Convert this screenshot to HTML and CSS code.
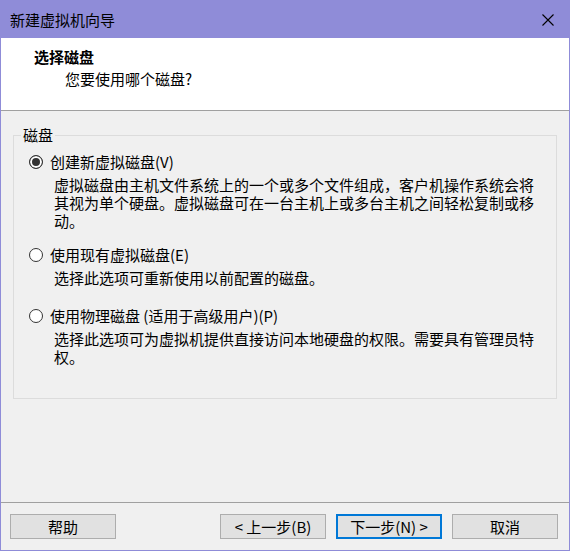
FILE: index.html
```html
<!DOCTYPE html>
<html lang="zh-CN">
<head>
<meta charset="utf-8">
<title>新建虚拟机向导</title>
<link rel="stylesheet" href="styles.css">
</head>
<body>
<div class="window">
  <div class="titlebar">
    <span class="title">新建虚拟机向导</span>
    <svg class="close" width="12" height="12" viewBox="0 0 12 12"><path d="M0.5 0.5 L11.5 11.5 M11.5 0.5 L0.5 11.5" stroke="#000" stroke-width="1.1" fill="none"/></svg>
  </div>
  <div class="header">
    <div class="header-title">选择磁盘</div>
    <div class="header-sub">您要使用哪个磁盘?</div>
  </div>
  <div class="body">
    <fieldset class="group">
      <legend class="group-label">磁盘</legend>
      <div class="group-inner">
        <div class="option">
          <span class="radio checked"></span>
          <span class="option-label">创建新虚拟磁盘(V)</span>
        </div>
        <div class="desc">虚拟磁盘由主机文件系统上的一个或多个文件组成，客户机操作系统会将其视为单个硬盘。虚拟磁盘可在一台主机上或多台主机之间轻松复制或移动。</div>
        <div class="option option-2">
          <span class="radio"></span>
          <span class="option-label">使用现有虚拟磁盘(E)</span>
        </div>
        <div class="desc">选择此选项可重新使用以前配置的磁盘。</div>
        <div class="option option-3">
          <span class="radio"></span>
          <span class="option-label">使用物理磁盘 (适用于高级用户)(P)</span>
        </div>
        <div class="desc">选择此选项可为虚拟机提供直接访问本地硬盘的权限。需要具有管理员特权。</div>
      </div>
    </fieldset>
  </div>
  <div class="footer">
    <button class="btn btn-help">帮助</button>
    <button class="btn">&lt; 上一步(B)</button>
    <button class="btn btn-default">下一步(N) &gt;</button>
    <button class="btn">取消</button>
  </div>
</div>
</body>
</html>
```
FILE: styles.css
```css
html, body {
  margin: 0;
  padding: 0;
  background: #f0f0f0;
}
body {
  font-family: "Noto Sans CJK SC", "Noto Sans", sans-serif;
  font-size: 15px;
  color: #000;
}
.window {
  width: 570px;
  height: 551px;
  box-sizing: border-box;
  border: 1px solid #8f8cd8;
  display: flex;
  flex-direction: column;
  background: #f0f0f0;
}
.titlebar {
  height: 37px;
  flex: none;
  background: #8f8cd8;
  display: flex;
  align-items: center;
  justify-content: space-between;
  padding: 0 15px 0 9px;
}
.title {
  line-height: 20px;
}
.close {
  display: block;
}
.header {
  flex: none;
  height: 63px;
  background: #fff;
  border-bottom: 1px solid #a0a0a0;
  padding: 9px 0 0 33px;
}
.header-title {
  font-weight: bold;
  line-height: 20px;
}
.header-sub {
  line-height: 20px;
  margin-top: 2px;
  padding-left: 31px;
}
.body {
  flex: 1;
  padding: 14px 12px 0 12px;
}
.group {
  margin: 0;
  border: 1px solid #dcdcdc;
  padding: 7px 0 32px 0;
  min-width: 0;
}
.group-label {
  margin-left: 7px;
  padding: 0 2px;
  line-height: 20px;
}
.group-inner {
  padding-left: 15px;
}
.option {
  display: flex;
  align-items: center;
  gap: 7px;
  line-height: 20px;
}
.option-2 {
  margin-top: 15px;
}
.option-3 {
  margin-top: 19px;
}
.radio {
  width: 14px;
  height: 14px;
  box-sizing: border-box;
  border: 1px solid #333;
  border-radius: 50%;
  background: #fff;
  flex: none;
}
.radio.checked {
  background: #333;
  box-shadow: inset 0 0 0 2px #fff;
}
.desc {
  margin: 4px 0 0 25px;
  width: 486px;
  line-height: 18px;
}
.footer {
  flex: none;
  height: 36px;
  border-top: 1px solid #a0a0a0;
  padding: 11px 11px 0 9px;
  display: flex;
  align-items: flex-start;
  gap: 10px;
}
.btn {
  width: 106px;
  height: 25px;
  box-sizing: border-box;
  border: 1px solid #adadad;
  background: #e1e1e1;
  font-family: "Noto Sans CJK SC", "Noto Sans", sans-serif;
  font-size: 15px;
  color: #000;
  padding: 0;
  line-height: 20px;
}
.btn-help {
  margin-right: auto;
}
.btn-default {
  border: 2px solid #0078d7;
}
```
